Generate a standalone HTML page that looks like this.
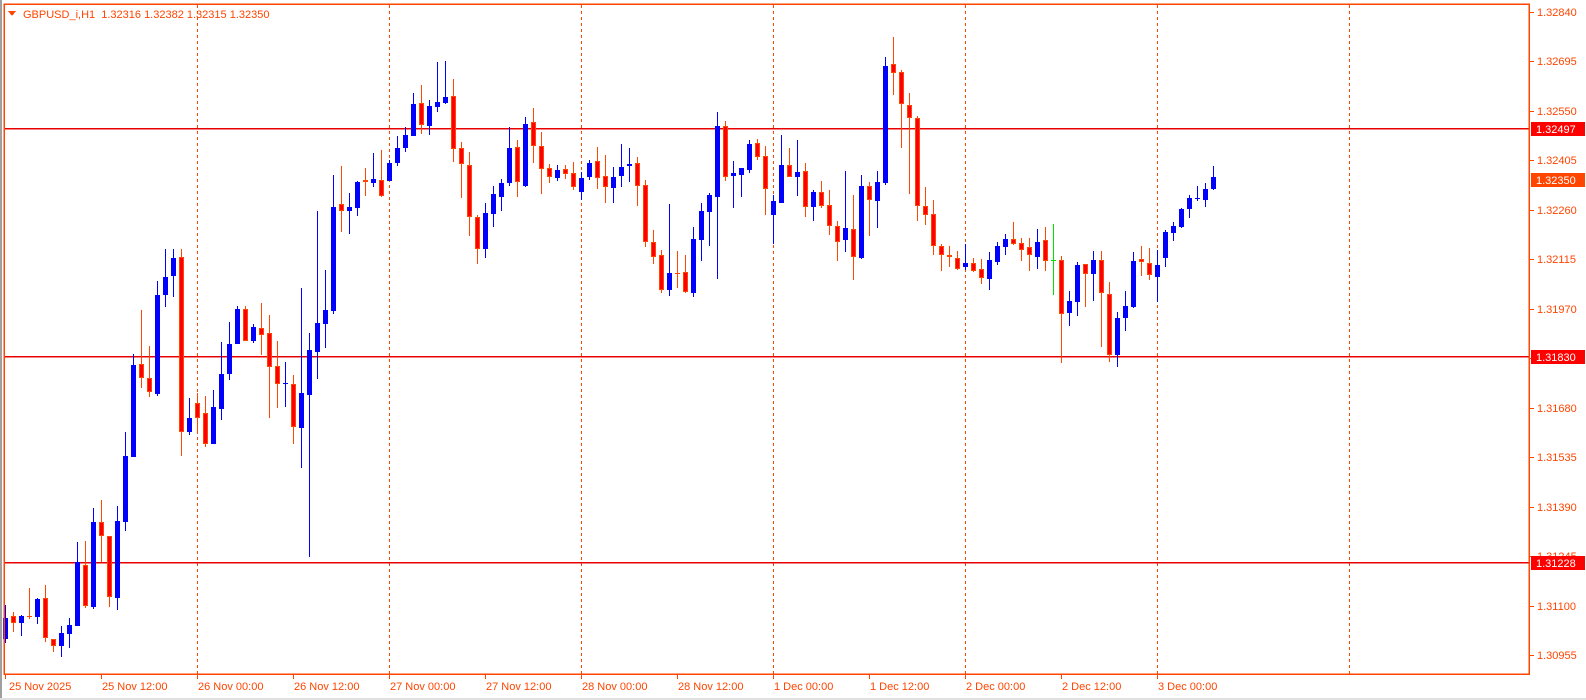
<!DOCTYPE html>
<html><head><meta charset="utf-8"><style>
html,body{margin:0;padding:0;background:#fff;width:1586px;height:700px;overflow:hidden}
svg{display:block}
text{font-family:"Liberation Sans",sans-serif;font-size:11px}
</style></head><body>
<svg id="s" width="1586" height="700" xmlns="http://www.w3.org/2000/svg" shape-rendering="crispEdges">
<rect x="0" y="0" width="1586" height="700" fill="#fff"/>
<rect x="0" y="0" width="2" height="700" fill="#a0a0a0"/>
<rect x="0" y="698" width="1586" height="2" fill="#e0e0e0"/>
<g id="grid"></g>
<g id="hl"></g>
<g id="c"></g>
<rect x="4" y="4" width="1525" height="670" fill="none" stroke="#FF4500" stroke-width="1.5"/>
<g id="ax"></g>
<polygon points="8,11 16,11 12,16" fill="#FF4500"/>
<text x="23" y="18" fill="#FF4500">GBPUSD_i,H1&#160;&#160;1.32316 1.32382 1.32315 1.32350</text>
</svg>
<script>
var NS="http://www.w3.org/2000/svg";
function el(p,t,a,txt){var e=document.createElementNS(NS,t);for(var k in a)e.setAttribute(k,a[k]);if(txt!=null)e.textContent=txt;document.getElementById(p).appendChild(e);return e;}
[197,389,581,773,965,1157,1349].forEach(function(x){el('grid','line',{x1:x+0.5,y1:5,x2:x+0.5,y2:674,stroke:'#FF4500','stroke-dasharray':'3,3','stroke-width':1});});
[128,356,562].forEach(function(y){el('hl','rect',{x:5,y:y,width:1524,height:1.5,fill:'#E80000'});});
var G=[
[240,[['b',1135,1198,1095,1208],['r',1128,1150,1116,1175],['b',1128,1150,1125,1187],['r',1128,1131,1045,1138],['b',1077,1130,1075,1153],['r',1075,1195,1035,1207],['r',1197,1218,1197,1237],['b',1180,1220,1158,1250],['b',1155,1181,1133,1222],['b',965,1157,907,1157],['r',975,1097,903,1105],['b',847,1103,803,1105],['r',847,889,780,965],['r',889,1072,889,1103],['b',843,1073,797,1108],['b',648,845,576,872],['b',375,650,342,652],['r',372,415,210,443],['r',415,457,318,470],['b',165,462,123,467],['b',112,167,27,200],['b',54,107,27,170],['r',52,577,27,647],['b',535,578,474,584],['r',490,535,460,580],['r',520,613,468,620],['b',501,611,450,611],['b',402,506,306,540],['b',313,404,246,420],['b',207,311,198,311],['r',208,304,198,304],['b',262,305,252,308],['r',265,286,189,346],['r',280,382,225,533],['r',379,433,303,503]]],
[50,[['b',1000,1003,935,1070],['r',1002,1132,975,1182],['b',1029,1133,714,1253],['b',901,1037,849,1520],['b',820,908,483,987],['b',780,822,660,893],['b',471,782,375,792],['r',462,482,347,545],['b',472,485,429,552],['b',396,473,392,498],['r',390,396,353,438],['b',387,398,308,410],['r',391,440,299,440],['b',339,392,330,392],['b',294,339,258,347],['b',255,294,231,305],['b',162,257,129,257],['r',160,227,104,250],['b',168,227,150,254],['b',156,170,36,185],['b',141,158,33,162],['r',138,298,87,335],['r',295,343,276,443],['r',346,502,306,557],['r',501,598,494,641],['b',489,598,459,623],['b',432,491,408,530],['b',399,440,387,482],['b',294,398,231,407],['r',292,397,270,440],['b',222,408,201,410],['r',216,287,174,338],['r',289,359,246,431],['r',354,382,341,398],['b',360,383,345,392],['r',357,373,345,386],['r',369,412,336,420],['b',384,425,366,450],['b',339,380,330,389],['r',333,383,291,416]]],
[100,[['r',229,263,165,308],['b',231,263,201,308],['b',201,227,132,260],['b',192,197,144,245],['r',189,257,171,317],['r',255,425,240,440],['r',426,470,390,491],['r',465,569,450,578],['b',519,569,312,587],['r',519,523,453,565],['r',517,578,465,580],['b',417,578,381,590],['b',333,419,309,482],['b',285,335,279,437],['b',78,290,36,536],['r',78,230,63,242],['b',219,227,183,323],['b',204,224,204,290],['b',132,209,120,218],['r',129,172,117,180],['r',168,268,138,344],['b',303,344,285,431],['b',195,308,105,308],['r',195,230,144,230],['b',216,230,120,287],['r',213,320,189,350],['b',276,320,270,362],['r',276,317,243,323],['r',315,377,270,404],['r',378,425,363,482],['b',384,419,213,455],['r',387,470,285,539],['b',258,473,225,476],['r',258,299,246,407],['b',246,302,213,383]]],
[30,[['b',108,460,81,465],['r',102,128,21,195],['r',126,221,120,353],['r',226,266,189,491],['r',264,527,258,572],['r',528,554,471,584],['r',552,647,510,675],['r',648,674,642,722],['r',676,683,648,710],['r',685,719,663,719],['b',699,711,642,719],['r',699,722,684,725],['r',717,743,687,761],['b',690,746,666,779],['b',648,695,636,704],['b',627,650,612,674],['r',627,641,576,644],['r',639,659,624,692],['r',651,674,624,722],['b',636,680,597,716],['r',630,692,591,722],['g',689,692,582,794],['r',690,851,678,1000],['b',813,848,782,887],['b',705,815,696,857],['r',702,731,702,830],['b',690,731,663,812],['r',690,790,663,952],['r',792,975,756,997],['b',864,975,846,1012],['b',828,863,782,902],['b',693,830,666,833],['r',687,695,648,737],['r',699,734,654,749],['b',705,740,660,815],['b',606,683,600,710],['b',588,608,576,632],['b',537,590,534,593],['b',504,536,495,563],['b',504,507,468,512],['b',477,509,459,530],['b',441,477,408,480]]]
];
var i=0;
G.forEach(function(g){var oy=g[0];g[1].forEach(function(c){
 var bt=oy+c[1]/3,bb=oy+c[2]/3,wt=oy+c[3]/3,wb=oy+c[4]/3;
 var cx=3+8*i;
 var wc=c[0]=='b'?'#0000FF':(c[0]=='g'?'#00E000':'#FF4500');
 el('c','rect',{x:cx+2,y:Math.round(wt),width:1,height:Math.max(1,Math.round(wb-wt)),fill:wc});
 var h=Math.max(1,Math.round(bb-bt));
 if(c[0]=='b') el('c','rect',{x:cx,y:Math.round(bt),width:5,height:h,fill:'#0000FF'});
 else if(c[0]=='g') el('c','rect',{x:cx,y:Math.round(bt),width:5,height:1,fill:'#00E000'});
 else {el('c','rect',{x:cx,y:Math.round(bt),width:5,height:h,fill:'#FF4500'});
   if(h>2) el('c','rect',{x:cx+1,y:Math.round(bt)+1,width:3,height:h-2,fill:'#FF0000'});}
 i++;});});
var labs=['1.32840','1.32695','1.32550','1.32405','1.32260','1.32115','1.31970','1.31825','1.31680','1.31535','1.31390','1.31245','1.31100','1.30955'];
labs.forEach(function(t,k){var y=11.7+49.5*k;
 el('ax','rect',{x:1530,y:Math.round(y),width:4,height:1,fill:'#FF4500'});
 el('ax','text',{x:1537,y:Math.round(y)+4,fill:'#FF4500'},t);});
[[128,'1.32497','#FF0000'],[179,'1.32350','#FF4500'],[356,'1.31830','#FF0000'],[562,'1.31228','#FF0000']].forEach(function(b){
 el('ax','rect',{x:1531,y:b[0]-6,width:54,height:14,fill:b[2]});
 el('ax','text',{x:1536,y:b[0]+5,fill:'#fff'},b[1]);});
var tl=['25 Nov 2025','25 Nov 12:00','26 Nov 00:00','26 Nov 12:00','27 Nov 00:00','27 Nov 12:00','28 Nov 00:00','28 Nov 12:00','1 Dec 00:00','1 Dec 12:00','2 Dec 00:00','2 Dec 12:00','3 Dec 00:00'];
tl.forEach(function(t,k){var x=k==0?5:5+96*k;
 el('ax','rect',{x:x,y:675,width:1,height:4,fill:'#FF4500'});
 el('ax','text',{x:k==0?x+4:x+1,y:690,fill:'#FF4500'},t);});
</script>
</body></html>
